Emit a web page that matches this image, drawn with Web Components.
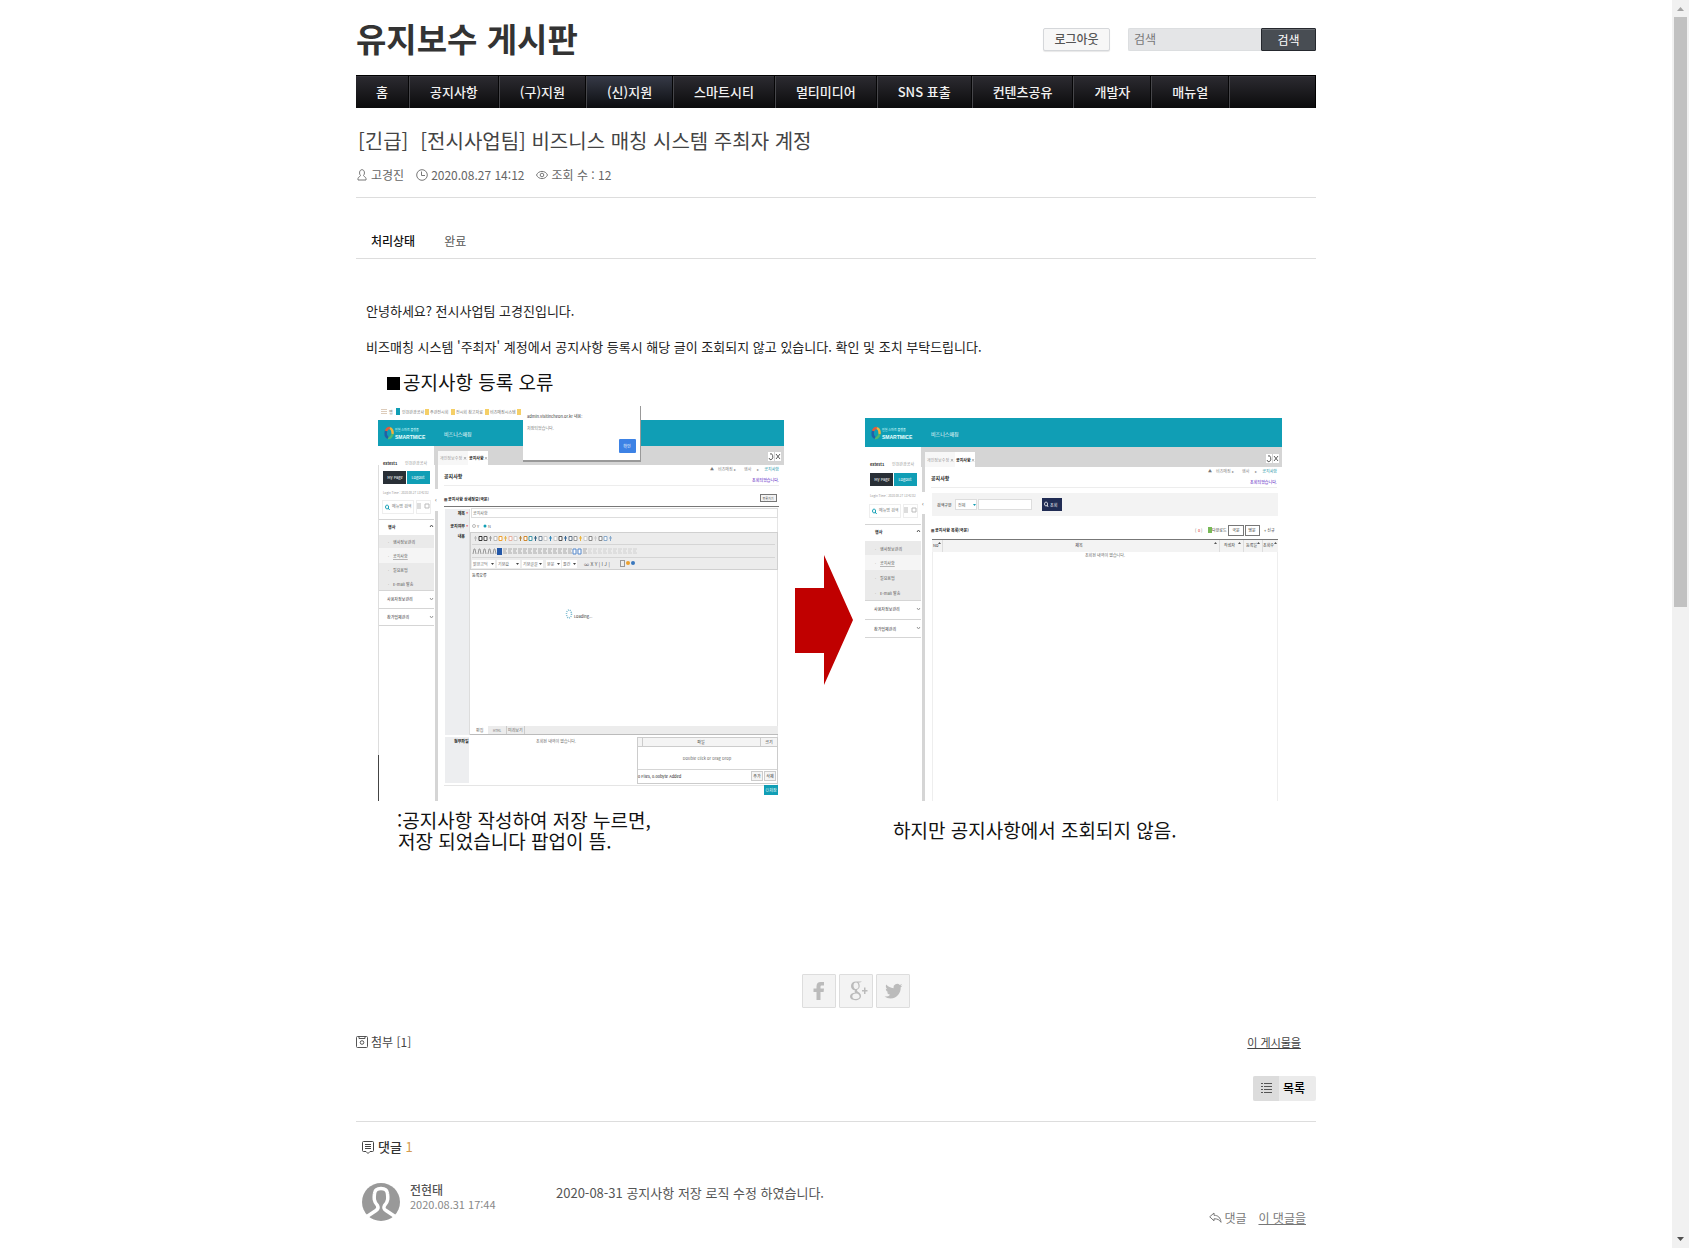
<!DOCTYPE html>
<html lang="ko">
<head>
<meta charset="utf-8">
<meta name="viewport" content="width=device-width, initial-scale=1">
<title>유지보수 게시판</title>
<style>
  html, body { margin: 0; height: 100%; background: #fff; }
  body { font-family: "Noto Sans CJK KR", "Noto Sans", sans-serif; font-size: 12px; line-height: 16px; color: #333; }
</style>
</head>
<body>
<board-app>
  <site-header></site-header>
  <site-nav></site-nav>
  <post-head author="고경진" date="2020.08.27 14:12" views="12">
    <span slot="category">[긴급]</span>
    <span slot="title">[전시사업팀] 비즈니스 매칭 시스템 주최자 계정</span>
  </post-head>
  <post-status label="처리상태">완료</post-status>
  <post-body>
    <p>안녕하세요? 전시사업팀 고경진입니다.</p>
    <p>비즈매칭 시스템 '주최자' 계정에서 공지사항 등록시 해당 글이 조회되지 않고 있습니다. 확인 및 조치 부탁드립니다.</p>
    <error-figure></error-figure>
  </post-body>
  <share-bar></share-bar>
  <post-foot count="1"></post-foot>
  <comment-list count="1">
    <comment-item author="전현태" date="2020.08.31 17:44">2020-08-31 공지사항 저장 로직 수정 하였습니다.</comment-item>
  </comment-list>
</board-app>

<script>
const base = `*,:host{box-sizing:border-box} a{color:inherit;text-decoration:none} button,input{font-family:inherit;margin:0}`;
function define(name, render) {
  customElements.define(name, class extends HTMLElement {
    connectedCallback() {
      if (this.shadowRoot) return;
      this.attachShadow({ mode: 'open' }).innerHTML = render(this);
    }
  });
}

define('board-app', () => `<style>${base}
  :host{display:flex;height:100vh;overflow:hidden}
  main{flex:1;min-width:0;overflow:hidden}
  .wrap{max-width:960px;margin:0 auto}
</style>
<main><div class="wrap"><slot></slot></div></main><scroll-track></scroll-track>`);

define('scroll-track', () => `<style>${base}
  :host{display:flex;flex-direction:column;align-items:center;width:17px;background:#f1f1f1}
  svg{flex:none;width:17px;height:17px}
  .rail{flex:1;align-self:stretch;padding:0 2px}
  .thumb{height:48.6%;width:13px;background:#c1c1c1}
</style>
<svg viewBox="0 0 17 17"><path d="M5 11h7L8.500 7z" fill="#a3a3a3"/></svg>
<div class="rail"><div class="thumb"></div></div>
<svg viewBox="0 0 17 17"><path d="M5 6h7L8.500 10z" fill="#505050"/></svg>`);

define('site-header', () => `<style>${base}
  :host{display:flex;align-items:center;height:75px;padding-top:4px}
  h1{margin:0;flex:1;padding-bottom:4px;font-size:33px;line-height:40px;font-weight:700;color:#333}
  .out{height:23px;width:67px;margin-right:18px;padding:0 0 2px;font-size:12px;line-height:16px;font-weight:500;color:#555;background:#f7f7f7;border:1px solid #d5d7da;border-radius:2px;box-shadow:0 1px 1px #e8e8e8}
  form{display:flex;height:23px}
  input{width:133px;padding:0 5px 2px;border:1px solid #dcdee0;border-right:0;border-radius:2px 0 0 2px;background:#e4e5e7;font-size:12px;line-height:16px;color:#777}
  input::placeholder{color:#777;opacity:1}
  form button{width:55px;padding:0;border:1px solid #25282e;border-radius:1px;background:#484d53;color:#fff;font-size:12px;line-height:16px;box-shadow:inset 0 1px #6a6e73}
</style>
<h1><a href="#">유지보수 게시판</a></h1>
<button class="out" type="button">로그아웃</button>
<form><input type="text" placeholder="검색" aria-label="검색"><button type="button">검색</button></form>`);

define('site-nav', () => {
  const items = ['홈', '공지사항', '(구)지원', '(신)지원', '스마트시티', '멀티미디어', 'SNS 표출', '컨텐츠공유', '개발자', '매뉴얼'];
  return `<style>${base}
  :host{display:block}
  nav{display:flex;height:33px;border-top:1px solid #000;border-right:1px solid #000;background:linear-gradient(#2c2b31,#0b0b0c);box-shadow:inset 0 1px #36353b}
  a{padding:0 20px;border-left:1px solid #46464a;border-right:1px solid #050506;color:#f2f2f2;font-size:13px;line-height:31px;font-weight:500;white-space:nowrap}
  a:first-child{border-left:0}
  a.on{background:linear-gradient(#363a47,#0c0d10)}
  i{border-left:1px solid #46464a}
</style>
<nav>${items.map((t, n) => `<a href="#"${n === 3 ? ' class="on"' : ''}>${t}</a>`).join('')}<i></i></nav>`;
});

define('post-head', el => `<style>${base}
  :host{display:block;padding:17px 0 13px;border-bottom:1px solid #ddd}
  h2{margin:0;padding-left:2px;display:flex;gap:12px;font-size:20px;line-height:32px;font-weight:400;color:#444}
  .meta{display:flex;align-items:center;gap:12px;margin-top:9px;height:18px;font-size:12px;line-height:18px;color:#666}
  .meta span{display:flex;align-items:center;gap:3px}
  svg{width:12px;height:12px;fill:none;stroke:#777}
</style>
<h2><slot name="category"></slot><slot name="title"></slot></h2>
<div class="meta">
  <span><svg viewBox="0 0 12 12"><path d="M4.500 6.500C3 5 3.200.7 6 .7S9 5 7.500 6.500c0 1 2.500 1.500 2.500 3V11H2V9.500c0-1.500 2.500-2 2.500-3z"/></svg>${el.getAttribute('author')}</span>
  <span><svg viewBox="0 0 12 12"><circle cx="6" cy="6" r="5.300"/><path d="M5.500 2.500v4H9"/></svg><time>${el.getAttribute('date')}</time></span>
  <span><svg viewBox="0 0 12 12"><path d="M.5 6C2.500 1.200 9.500 1.200 11.500 6 9.500 10.800 2.500 10.800.500 6z"/><circle cx="6" cy="6" r="1.800"/></svg>조회 수 : ${el.getAttribute('views')}</span>
</div>`);

define('post-status', el => `<style>${base}
  :host{display:block;padding:34px 0 0}
  dl{display:flex;gap:29px;margin:0;padding:0 15px 8px;border-bottom:1px solid #ddd;line-height:18px;color:#555}
  dt{font-weight:500;color:#111} dd{margin:0}
</style>
<dl><dt>${el.getAttribute('label')}</dt><dd><slot></slot></dd></dl>`);

define('post-body', () => `<style>${base}
  :host{display:block;padding:42px 10px 0;font-size:13px;line-height:20px;color:#222}
  ::slotted(p){margin:0 0 16px!important}
</style><slot></slot>`);

/* Annotated before/after illustration of the admin console. */
define('error-figure', () => {
  const R = (x, y, w, h, fill, extra = '') => `<rect x="${x}" y="${y}" width="${w}" height="${h}" fill="${fill}" ${extra}/>`;
  const T = (x, y, s, t, fill = '#666', extra = '') => `<text x="${x}" y="${y}" font-size="${s}" fill="${fill}" ${extra}>${t}</text>`;
  const B = 'font-weight="700"', M = 'text-anchor="middle"', E = 'text-anchor="end"';
  const line = (x1, x2, y, c = '#d5d5d5') => R(x1, y, x2 - x1, 1, c);
  const box = (x, y, w, h, fill = '#fff', c = '#ccc') => R(x + .5, y + .5, w - 1, h - 1, fill, `stroke="${c}"`);
  function shell(dx, k, top, right) {
    const Y = y => Math.round(463 + (y - 463) * k + (k > 1 ? 1 : 0));
    const X = x => x + dx, tb = k > 1 ? 447 : 446, tl = k > 1 ? 467 : 465;
    let s = R(X(378), top, right - X(378), tb - top, '#109eb5') + R(X(434), tb, right - X(434), tl - tb, '#d5d5d5') + R(X(435), tb, 3, 801 - tb, '#d5d5d5');
    s += `<g fill="none" stroke-width="2.500" transform="translate(${X(389)} 433)"><path d="M-3-2A4 5.500 0 0 1 1-5" stroke="#e45a3c"/><path d="M1-5A4 5.500 0 0 1 3.500 1" stroke="#f1b33c"/><path d="M3.500 1A4 5.500 0 0 1-1 5" stroke="#52b96c"/><path d="M-1 5A4 5.500 0 0 1-3-2" stroke="#245fa5"/></g>`;
    s += T(X(395), 431, 3, '인천 스마트 플랫폼', '#dff') + T(X(395), 439, 5, 'SMARTMICE', '#e8ffff', B + ' font-family="Liberation Sans"') + T(X(444), 436, 5, '비즈니스매칭', '#fff');
    s += R(X(438), tb + 5, 30, tl - tb - 5, '#f7f7f7') + R(X(468), tb + 5, 20, tl - tb - 5, '#fff') + T(X(440), tl - 5, 4, '개인정보수정', '#999') + T(X(469), tl - 5, 4, '공지사항', '#222', B);
    s += `<path d="M${X(464)} ${tl - 8}l2 2.500m0-2.500l-2 2.500M${X(485)} ${tl - 8}l2 2.500m0-2.500l-2 2.500" stroke="#888" stroke-width=".6"/>`;
    s += R(right - 16, tl - 13, 6, 9, '#fff') + R(right - 9, tl - 13, 6, 9, '#fff') + `<path d="M${right - 14} ${tl - 11}a2 3 0 1 1-1 4M${right - 8} ${tl - 11}l4 5m0-5l-4 5" stroke="#333" stroke-width=".8" fill="none"/>`;
    s += T(right - 74, tl + 6, 4, '▲', '#777') + T(right - 66, tl + 6, 4, '비즈매칭', '#888') + T(right - 50, tl + 6, 4, '▸', '#888') + T(right - 40, tl + 6, 4, '행사', '#888') + T(right - 27, tl + 6, 4, '▸', '#888') + T(right - 5, tl + 6, 4, '공지사항', '#148fa3', E) + T(right - 5, tl + 17, 4, '조회되었습니다.', '#40b', E) + line(X(444), right - 5, tl + 20, '#ededed');
    s += T(X(444), tl + 13, 5, '공지사항', '#222', B);
    s += T(X(383), Y(465), 4, 'extest1', '#333', B) + T(X(405), Y(465), 4, '인천관광공사', '#999');
    s += R(X(383), Y(471), 23, Y(484) - Y(471), '#292f36') + R(X(407), Y(471), 23, Y(484) - Y(471), '#109eb5') + T(X(395), Y(479), 4, 'My Page', '#fff', M) + T(X(418), Y(479), 4, 'Logout', '#fff', M);
    s += T(X(383), Y(494), 3, 'Login Time : 2020.08.27 13:42:02', '#999');
    s += box(X(382), Y(500), 32, 14, '#fff', '#eee') + box(X(416), Y(500), 15, 14, '#fff', '#eee') + `<path d="M${X(387)} ${Y(505)}a1.500 2 0 1 0 .1 0m1 3l1.500 2" fill="none" stroke="#109eb5"/>` + T(X(392), Y(508), 4, '메뉴명 검색', '#777') + `<path d="M${X(417)} ${Y(504)}h4m-4 2h4m-4 2h4M${X(425)} ${Y(504)}h4v4h-4z" fill="none" stroke="#bbb"/>`;
    s += R(X(434), Y(489), 5, 22, '#fff') + T(X(435), Y(502), 6, '‹', '#555');
    s += line(X(378), X(434), Y(519)) + T(X(388), Y(529), 4, '행사', '#222', B) + `<path d="M${X(430)} ${Y(527)}l1.500-2 1.500 2" fill="none" stroke="#555"/>`;
    s += R(X(378), Y(535), 56, Y(599) - Y(543) - 1, '#eaeaea') + R(X(378), Y(548), 56, 15, '#f5f5f5');
    ['행사정보관리', '공지사항', '필요용업', 'E-mail 발송'].forEach((t, n) => s += T(X(388), Y(544 + n * 14), 4, '·', '#888') + T(X(393), Y(544 + n * 14), 4, t, '#555', n === 1 ? 'text-decoration="underline"' : ''));
    s += line(X(378), X(434), Y(590)) + T(X(387), Y(601), 4, '사용자정보관리', '#333') + line(X(378), X(434), Y(608)) + T(X(387), Y(619), 4, '참가업체관리', '#333') + line(X(378), X(434), Y(625));
    s += [599, 617].map(y => `<path d="M${X(430)} ${Y(y) - 1}l1.500 2 1.500-2" fill="none" stroke="#999"/>`).join('');
    return s;
  }
  let g = R(387, 377, 13, 13, '#000') + T(403, 390, 19, '공지사항 등록 오류', '#111');
  // Left console
  g += '<path d="M382 409v5m2-5v5m2-5v5" stroke="#b97" stroke-dasharray="1 1"/>' + T(389, 414, 4, '앱', '#777') + R(396, 408, 4, 7, '#109eb5') + T(402, 414, 4, '인천관광공사', '#777');
  [[425, '주관전시회'], [451, '전시회 참고자료'], [485, '비즈매칭시스템'], [517, '']].forEach(([x, t]) => g += R(x, 409, 4, 6, '#f5cf67') + T(x + 5, 414, 4, t, '#777'));
  g += shell(0, 1, 420, 784) + R(378, 465, 1, 336, '#ddd') + R(378, 755, 1, 46, '#444');
  g += R(523, 406, 118, 56, '#999') + R(523, 406, 117, 54, '#fff') + T(527, 418, 4, 'admin.visitincheon.or.kr 내용:', '#333') + T(527, 430, 4, '저장되었습니다.', '#777') + R(619, 439, 17, 14, '#3d82e5', 'rx="1"') + T(627, 448, 4, '확인', '#fff', M);
  g += T(444, 501, 4, '⊞ 공지사항 상세정보(국문)', '#222', B) + box(760, 494, 17, 8, '#f3f3f3', '#777') + T(768, 500, 3, '목록가기', '#555', M) + line(444, 779, 506, '#777');
  g += R(445, 509, 24, 226, '#edeef0') + R(469, 509, 1, 226, '#ddd') + R(777, 509, 1, 276, '#e5e5e5');
  g += [['제목', 515], ['공지여부', 528], ['내용', 538]].map(([t, y]) => T(465, y, 4, t, '#222', `${B} ${E}`)).join('') + T(466, 516, 5, '*', '#d22') + T(466, 529, 5, '*', '#d22');
  g += box(471, 508, 307, 10, '#fff', '#ddd') + T(473, 515, 4, '공지사항') + `<circle cx="474" cy="526" r="1.500" fill="#fff" stroke="#bbb"/><circle cx="485" cy="526" r="1.500" fill="#109eb5"/>` + T(477, 528, 4, 'Y') + T(488, 528, 4, 'N');
  g += box(470, 532, 308, 38, '#ececec', '#d0d0d0') + line(472, 775, 544) + line(472, 775, 557);
  const cols = ['#bbb', '#333', '#555', '#999', '#bbb', '#f0a030', '#e9b64d', '#e9b0a0', '#ccc', '#b8863b', '#d08830', '#49a', '#368', '#789', '#ccc', '#38b', '#ccc', '#555', '#369', '#678', '#999', '#ecb43a', '#ccc', '#888', '#ccc', '#888', '#8ac', '#8ac'];
  cols.forEach((c, n) => g += n % 3 ? `<path d="M${474 + n * 5} 536.500h3v4h-3z" stroke="${c}" fill="#fff"/>` : `<path d="M${474 + n * 5} 538h3m-1.500-2v5" stroke="${c}" fill="none"/>`);
  for (let n = 0; n < 33; n++) { const c = n > 22 ? '#ccc' : '#999', x = 473 + n * 5; g += n === 5 ? R(x - 1, 548, 5, 7, '#2458a8') : n === 20 || n === 21 ? `<path d="M${x} 549h3v5h-3z" stroke="#58c" fill="#fff"/>` : n < 6 ? `<path d="M${x} 554l1-5h1l1 5" stroke="${c}" fill="none"/>` : `<path d="M${x} 549h4m-4 2h3m-3 2h4" stroke="${c}" stroke-width=".8" fill="none"/>`; }
  [[472, 24, '맑은고딕'], [497, 24, '기본값'], [522, 22, '기본글꼴'], [546, 16, '본문'], [562, 16, '줄간']].forEach(([x, w, t]) => g += R(x, 560, w - 1, 8, '#fff') + T(x + 1, 566, 4, t) + `<path d="M${x + w - 5} 563h3l-1.500 2z" fill="#444"/>`);
  g += T(584, 566, 5, '∞ X Y | I J |', '#555') + box(620, 560, 5, 7, '#eee', '#999') + '<circle cx="628" cy="563" r="2" fill="#eea12e"/><circle cx="633" cy="563" r="2" fill="#3a78bd"/>';
  g += T(472, 577, 4, '등록오류', '#222') + '<ellipse cx="569" cy="614" rx="2.500" ry="4" fill="none" stroke="#79b9cf" stroke-width="1.500" stroke-dasharray="1 1"/>' + T(574, 618, 4, 'Loading...', '#333');
  g += R(470, 726, 308, 8, '#ececec') + R(470, 726, 18, 8, '#fff') + line(470, 778, 734, '#bbb') + T(476, 732, 4, '편집') + T(493, 732, 3, 'HTML') + T(508, 732, 4, '미리보기') + R(506, 726, 1, 8, '#ccc') + R(524, 726, 1, 8, '#ccc');
  g += R(445, 737, 24, 46, '#edeef0') + T(454, 743, 4, '첨부파일', '#222', B) + T(536, 743, 4, '조회된 내역이 없습니다.') + line(444, 778, 785, '#e5e5e5');
  g += box(637, 737, 141, 47) + box(637, 737, 141, 10, '#f4f4f4') + R(642, 737, 1, 9, '#ccc') + R(760, 737, 1, 9, '#ccc') + T(701, 744, 4, '파일', '#333', M) + T(769, 744, 4, '크기', '#333', M) + T(707, 760, 4, 'Double click or Drag Drop', '#666', M) + line(638, 777, 769) + T(638, 778, 4, '0 Files, 0.00byte Added', '#222');
  g += box(751, 771, 12, 10, '#f5f5f5') + box(764, 771, 12, 10, '#f5f5f5') + T(757, 778, 4, '추가', '#333', M) + T(770, 778, 4, '삭제', '#333', M) + R(764, 785, 14, 10, '#109eb5') + T(771, 792, 4, '⊙저장', '#fff', M);
  g += '<path d="M795 588h29v-33l29 65-29 65v-32h-29z" fill="#c00000"/>';
  // Right console
  g += shell(487, 1.068, 418, 1282);
  g += R(932, 493, 346, 23, '#f3f3f3') + T(937, 507, 4, '검색구분', '#222') + box(955, 499, 22, 11, '#fff', '#ddd') + T(958, 507, 4, '전체') + '<path d="M973 504h3l-1.500 2z" fill="#109eb5"/>' + box(978, 499, 54, 11, '#fff', '#ddd') + R(1042, 498, 20, 13, '#202c54') + '<path d="M1046 502a1.500 2 0 1 0 .1 0m1 3l1 2" stroke="#fff" stroke-width=".8" fill="none"/>' + T(1050, 507, 4, '조회', '#fff');
  g += T(931, 532, 4, '⊞ 공지사항 목록(국문)', '#222', B) + T(1195, 532, 4, '[', '#555') + T(1198, 532, 4, '0', '#d22') + T(1201, 532, 4, ']', '#555') + R(1208, 527, 4, 6, '#78b957') + T(1212, 532, 4, '다운로드', '#333');
  g += box(1228, 525, 16, 11, '#fff', '#777') + box(1245, 525, 15, 11, '#fff', '#777') + T(1236, 532, 4, '국문', '#333', M) + T(1252, 532, 4, '영문', '#333', M) + T(1264, 532, 4, '+ 신규', '#333');
  g += R(932, 539, 346, 13, '#f3f3f3') + line(932, 1278, 539, '#777') + T(933, 547, 4, 'No', '#333') + T(1079, 547, 4, '제목', '#333', M) + T(1224, 547, 4, '작성자', '#333') + T(1246, 547, 4, '등록일', '#333') + T(1263, 547, 4, '조회수', '#333') + T(1105, 557, 4, '조회된 내역이 없습니다.', '#666', M);
  [942, 1219, 1243, 1262].forEach(x => g += R(x, 540, 1, 12, '#ddd'));
  [941, 1217, 1241, 1260, 1277].forEach(x => g += `<path d="M${x - 3} 544h3l-1.500-2z" fill="#555"/>`);
  g += R(932, 552, 1, 249, '#eee') + R(1277, 552, 1, 249, '#eee');
  g += T(397, 828, 19, ':공지사항 작성하여 저장 누르면,', '#111') + T(398, 849, 19, '저장 되었습니다 팝업이 뜸.', '#111') + T(893, 838, 19, '하지만 공지사항에서 조회되지 않음.', '#111');
  return `<style>${base}
  :host{display:block;margin-top:-10px} svg{display:block;width:100%;height:auto;font-family:"Noto Sans CJK KR","Noto Sans",sans-serif}
</style><svg viewBox="366 363 940 510" role="img" aria-label="공지사항 등록 오류">${g}</svg>`;
});

define('share-bar', () => `<style>${base}
  :host{display:block}
  nav{display:flex;justify-content:center;gap:3px;padding:101px 0 0 40px}
  a{display:block;width:34px;height:34px;border:1px solid #ddd;border-radius:1px;background:#f3f3f3}
  svg{display:block;width:32px;height:32px;fill:#bbb}
</style>
<nav>
<a href="#" aria-label="Facebook"><svg viewBox="0 0 32 32"><path d="M13.500 25v-8h-3v-3.500h3v-2.200C13.500 8.500 15 7 17.700 7H21v3.500h-2c-1 0-1.500.5-1.500 1.300v1.700H21L20.600 17h-3.100v8z"/></svg></a>
<a href="#" aria-label="Google+"><svg viewBox="0 0 32 32"><path fill-rule="evenodd" d="M22 6.500h-6c-3.200 0-5 2-5 4.600 0 2.400 1.600 4.200 4 4.200-.6 1-.4 1.700.3 2.300-3.200.2-5.300 1.700-5.300 4 0 2.300 2.200 3.600 5.200 3.600 3.600 0 5.800-1.800 5.800-4.300 0-1.600-.8-2.600-2.300-3.700-1.200-.9-1.700-1.300-1.700-2 0-1.100 2.700-1.300 2.700-4.300 0-1.500-.6-2.600-1.500-3.300h1.800l2-1.100zM16 7.600c1.500 0 2.500 1.600 2.500 3.700 0 1.800-.9 2.800-2.400 2.800-1.600 0-2.600-1.700-2.600-3.700 0-1.700 1-2.800 2.500-2.800zm.3 11c2 .2 3.300 1.400 3.300 3s-1.300 2.500-3.500 2.500c-2.300 0-3.800-1-3.800-2.600 0-1.700 1.500-2.800 4-2.900zM24 12.500h1.500V15h2v1.500h-2V19H24v-2.500h-2V15h2z"/></svg></a>
<a href="#" aria-label="Twitter"><svg viewBox="0 0 32 32"><path d="M25.500 10.400c-.6.300-1.300.5-2 .6.700-.4 1.300-1.100 1.500-1.900-.7.400-1.400.7-2.200.9a3.700 3.700 0 0 0-6.300 3.200c-2.900-.2-5.500-1.600-7.200-3.700-.9 1.600-.5 3.600 1.100 4.700-.6 0-1.100-.2-1.600-.4 0 1.700 1.200 3.100 2.800 3.500-.5.100-1 .1-1.600 0 .5 1.400 1.800 2.400 3.300 2.400A7 7 0 0 1 7.500 21.500 10 10 0 0 0 13.500 23.500c6.800 0 10.500-6 10.200-11.200.7-.500 1.300-1.200 1.800-1.900z"/></svg></a>
</nav>`);

define('post-foot', el => `<style>${base}
  :host{display:flex;flex-direction:column;padding-top:24px}
  .row{display:flex;justify-content:space-between;align-items:center;height:20px;padding-right:15px;color:#444}
  button{display:flex;align-items:center;gap:3px;padding:0;border:0;background:none;font-size:12px;line-height:18px;color:#444}
  .row svg{width:12px;height:12px;fill:none;stroke:#555}
  .row a{text-decoration:underline;font-size:11px;line-height:18px}
  .list{align-self:flex-end;display:flex;margin-top:24px;width:63px;height:25px;border-radius:2px;overflow:hidden;background:#ebebeb;color:#000;font-weight:500;line-height:24px}
  .list svg{width:26px;height:25px;background:#dcdcdc;stroke:#555;margin-right:4px}
</style>
<div class="row"><button type="button"><svg viewBox="0 0 12 12"><rect x=".5" y=".5" width="11" height="11" rx="1"/><path d="M3 .5v2h6v-2"/><circle cx="6" cy="6.500" r="1.800"/></svg>첨부 [${el.getAttribute('count')}]</button><a href="#">이 게시물을</a></div>
<a class="list" href="#"><svg viewBox="0 0 26 25"><path d="M8 7.500h2m1 0h8M8 10.500h2m1 0h8M8 13.500h2m1 0h8M8 16.500h2m1 0h8"/></svg>목록</a>`);

define('comment-list', el => `<style>${base}
  :host{display:block;margin-top:20px;border-top:1px solid #ddd;padding:15px 6px 0}
  h3{display:flex;align-items:center;gap:4px;margin:0 0 26px;font-size:13px;line-height:20px;font-weight:500;color:#333}
  svg{width:12px;height:13px;fill:none;stroke:#444}
  em{font-style:normal;font-weight:400;color:#d59a4f}
</style>
<h3><svg viewBox="0 0 12 13"><path d="M1.500.500h9a1 1 0 0 1 1 1v8a1 1 0 0 1-1 1H8l-2 2-2-2H1.500a1 1 0 0 1-1-1v-8a1 1 0 0 1 1-1zM3 3.500h6M3 5.500h6M3 7.500h6"/></svg><span>댓글 <em>${el.getAttribute('count')}</em></span></h3>
<slot></slot>`);

define('comment-item', el => `<style>${base}
  :host{display:flex;align-items:flex-start}
  .face{flex:none;width:38px;height:38px;margin:0 10px 0 0}
  .who{width:146px;line-height:15px;color:#888;font-size:11px}
  .who a{display:block;font-size:12px;font-weight:500;color:#555;line-height:14px}
  .main{flex:1;display:flex;flex-direction:column}
  p{margin:0;font-size:13px;line-height:20px;color:#555}
  .act{display:flex;align-items:center;justify-content:flex-end;gap:12px;margin-top:6px;padding-right:4px;line-height:18px;color:#777}
  .act a{display:flex;align-items:center;gap:2px}
  .act a:last-child{text-decoration:underline}
  .act svg{width:13px;height:12px;fill:none;stroke:#777}
</style>
<svg class="face" viewBox="0 0 38 38"><circle cx="19" cy="19" r="19" fill="#999"/><path d="M5 33.500l9-6q3-2 1.500-5c-4-4-3.500-8-3-12 .3-3.500 2.500-5 6.500-5s6.200 1.500 6.500 5c.5 4 1 8-3 12-1.500 3 0 4 1.500 5l9 6" fill="none" stroke="#fff" stroke-width="3.500"/></svg>
<div class="who"><a href="#">${el.getAttribute('author')}</a><time>${el.getAttribute('date')}</time></div>
<div class="main"><p><slot></slot></p>
<div class="act"><a href="#"><svg viewBox="0 0 13 12"><path d="M.7 4.800 5 1v2.300c4 0 6.500 2.200 7 7-1.600-2.600-3.500-3.600-7-3.500v2z"/></svg>댓글</a><a href="#">이 댓글을</a></div></div>`);
</script>
</body>
</html>
